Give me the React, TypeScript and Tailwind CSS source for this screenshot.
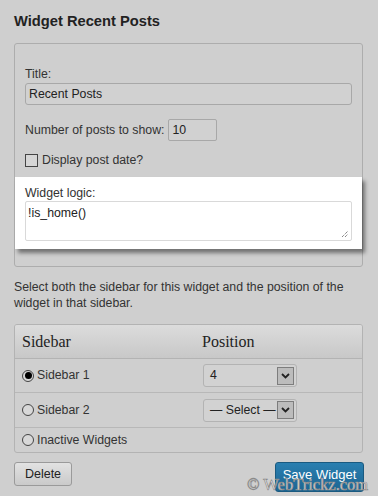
import React from 'react';

const font = { fontFamily: '"Liberation Sans", Arial, sans-serif' };

function Radio({ checked }: { checked?: boolean }) {
  return (
    <span className="flex h-[12px] w-[12px] items-center justify-center rounded-full border border-[#444] bg-[#d8d8d8]">
      {checked && <span className="h-[7px] w-[7px] rounded-full bg-black" />}
    </span>
  );
}

function Select({ value }: { value: string }) {
  return (
    <div className="flex h-[23px] w-[94px] items-center justify-between rounded-[3px] border border-[#b3b3b3] bg-[#d2d2d2] pl-[6px] pr-[2px]">
      <span className="whitespace-nowrap text-[#222]">{value}</span>
      <span className="flex h-[18px] w-[17px] shrink-0 items-center justify-center border border-[#7d7d7d] bg-[#bcbcbc]">
        <svg width="9" height="6" viewBox="0 0 9 6">
          <path d="M1 1 L4.5 4.5 L8 1" fill="none" stroke="#222" strokeWidth="1.8" />
        </svg>
      </span>
    </div>
  );
}

export default function App() {
  return (
    <div
      className="relative h-[496px] w-[378px] overflow-hidden bg-[#cfcfcf] pl-[14px] pr-[15px] pt-[12px] text-[12.3px] text-[#333]"
      style={font}
    >
      <h2 className="text-[14.7px] font-bold leading-[18px] text-[#222]">Widget Recent Posts</h2>

      <div className="mt-[13px] rounded-[3px] border border-[#adadad] px-[10px] pb-[17px] pt-[23px]">
        <div className="leading-[15px]">Title:</div>
        <div className="mt-[1px] flex h-[22px] items-center rounded-[3px] border border-[#a8a8a8] bg-[#d1d1d1] pl-[3px] text-[#222]">
          Recent Posts
        </div>

        <div className="mt-[14px] flex items-center gap-[4px]">
          <span>Number of posts to show:</span>
          <div className="flex h-[22px] w-[49px] items-center rounded-[2px] border border-[#a8a8a8] bg-[#d1d1d1] pl-[3px] text-[#222]">
            10
          </div>
        </div>

        <div className="mt-[13px] flex h-[13px] items-center gap-[4px]">
          <span className="h-[13px] w-[13px] border border-[#444] bg-[#d6d6d6]" />
          <span>Display post date?</span>
        </div>

        <div className="-mx-[10px] mt-[10px] bg-white px-[10px] pb-[8px] pt-[9px] shadow-[3px_4px_4px_rgba(0,0,0,0.45)]">
          <div className="leading-[15px]">Widget logic:</div>
          <div className="relative h-[40px] rounded-[2px] border border-[#d9d9d9] bg-white pl-[2px] pt-[4px] leading-[15px] text-[#222]">
            !is_home()
            <svg className="absolute bottom-[2px] right-[2px]" width="8" height="8" viewBox="0 0 8 8">
              <path d="M1 7 L7 1 M4 7 L7 4" stroke="#555" strokeWidth="1" strokeDasharray="1 1" />
            </svg>
          </div>
        </div>
      </div>

      <p className="mt-[12px] leading-[16px]">
        Select both the sidebar for this widget and the position of the widget in that sidebar.
      </p>

      <div className="mt-[13px] overflow-hidden rounded-[3px] border border-[#b3b3b3]">
        <div
          className="flex h-[34px] items-center border-b border-[#b3b3b3] bg-gradient-to-b from-[#dcdcdc] to-[#c8c8c8] text-[16px] text-[#222]"
          style={{ fontFamily: '"Liberation Serif", Georgia, serif' }}
        >
          <div className="w-[180px] pl-[7px]">Sidebar</div>
          <div className="pl-[7px]">Position</div>
        </div>
        <div className="flex h-[34px] items-center border-b border-[#b8b8b8]">
          <div className="flex w-[180px] items-center gap-[3px] pl-[7px]">
            <Radio checked />
            <span>Sidebar 1</span>
          </div>
          <div className="pl-[8px]">
            <Select value="4" />
          </div>
        </div>
        <div className="flex h-[35px] items-center border-b border-[#b8b8b8]">
          <div className="flex w-[180px] items-center gap-[3px] pl-[7px]">
            <Radio />
            <span>Sidebar 2</span>
          </div>
          <div className="pl-[8px]">
            <Select value="— Select —" />
          </div>
        </div>
        <div className="flex h-[24px] items-center">
          <div className="flex items-center gap-[3px] pl-[7px]">
            <Radio />
            <span>Inactive Widgets</span>
          </div>
        </div>
      </div>

      <div className="mt-[9px] flex items-start justify-between">
        <button className="h-[24px] w-[58px] rounded-[3px] border border-[#9a9a9a] bg-gradient-to-b from-[#e2e2e2] to-[#cacaca] text-[12.5px] text-[#222]">
          Delete
        </button>
        <button className="-mr-[1px] h-[30px] w-[89px] rounded-[3px] border border-[#1a5a80] bg-gradient-to-b from-[#2a7fb0] to-[#1d6592] pb-[4px] text-[13px] text-white">
          Save Widget
        </button>
      </div>

      <div
        className="absolute left-[247px] top-[476px] whitespace-nowrap text-[16.5px] leading-[18px] text-[#f2f2f2] [-webkit-text-stroke:0.7px_#8a8a8a]"
        style={{ fontFamily: '"Liberation Serif", Georgia, serif' }}
      >
        © WebTrickz.com
      </div>
    </div>
  );
}
